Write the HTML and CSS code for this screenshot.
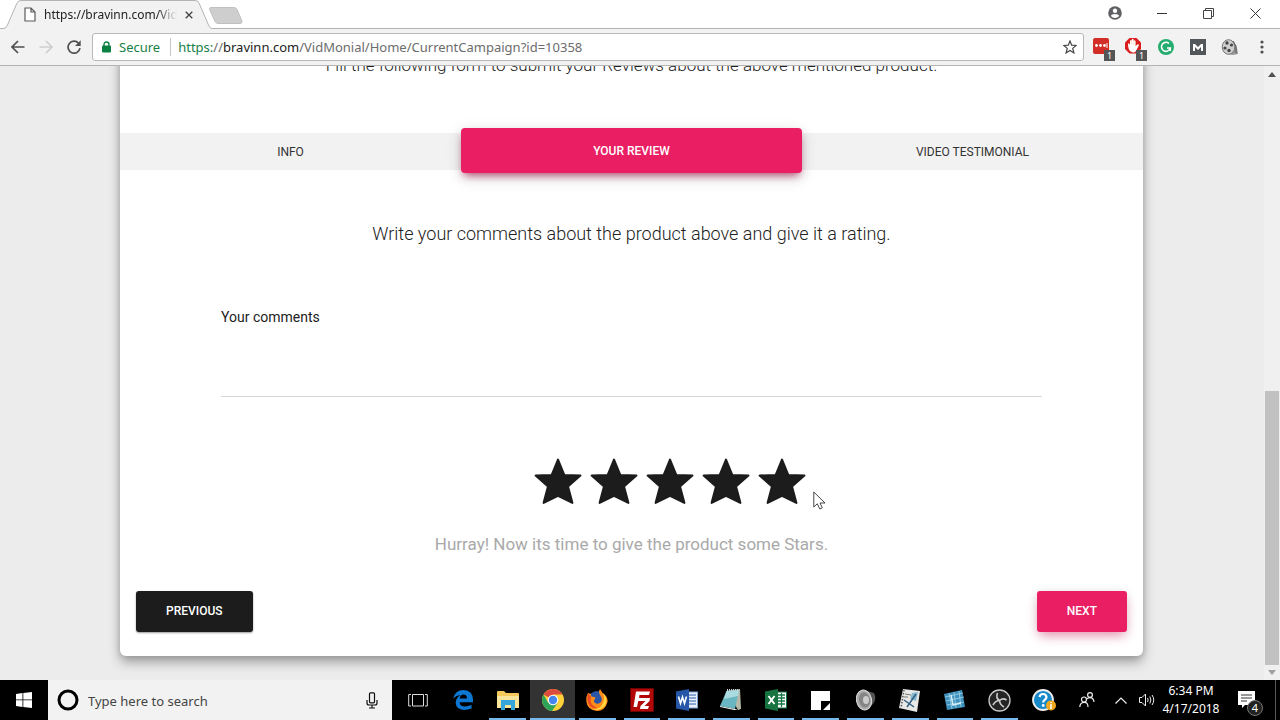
FILE: index.html
```html
<!DOCTYPE html>
<html lang="en">
<head>
<meta charset="utf-8">
<meta name="viewport" content="width=device-width, initial-scale=1">
<title>VidMonial</title>
<link rel="stylesheet" href="styles.css">
</head>
<body>
<div class="tabstrip">
  <div class="browser-tab">
    <svg class="tab-shape" viewBox="0 0 212 29" width="212" height="29"><path d="M0 28.500H3Q6 28.500 7.500 25L17 3Q18.500.5 21 .5H195Q198 .5 199 3L208.500 25Q210 28.500 212 28.500V29H0Z" fill="#f2f2f2"/><path d="M0 28.500H3Q6 28.500 7.500 25L17 3Q18.500.5 21 .5H195Q198 .5 199 3L208.500 25Q210 28.500 212 28.500" fill="none" stroke="#b4b4b4"/></svg>
    <svg class="doc-icon" viewBox="0 0 12 15" width="12" height="15"><path d="M1 1H7L11 5V14H1ZM7 1V5H11" fill="#fff" stroke="#5a5a5a" stroke-width="1.200"/></svg>
    <span class="tab-title">https://bravinn.com/VidMonial</span>
    <button class="plain tab-close" aria-label="Close tab"><svg viewBox="0 0 8 8" width="8" height="8"><path d="M.7.7L7.300 7.300M7.300.7L.7 7.300" stroke="#444" stroke-width="1.300"/></svg></button>
  </div>
  <button class="plain new-tab" aria-label="New tab"><svg viewBox="0 0 34 17" width="34" height="17"><path d="M2 .5H25Q27 .5 28 2.500L33 14Q33.500 16.500 31 16.500H9Q7 16.500 6 14.500L.8 3Q0 .5 2 .5Z" fill="#cecece" stroke="#c0c0c0"/></svg></button>
  <div class="window-buttons">
    <button class="plain" aria-label="Profile"><svg viewBox="0 0 14 14" width="14" height="14"><circle cx="7" cy="7" r="6.800" fill="#5f6063"/><circle cx="7" cy="4.800" r="2.200" fill="#fff"/><path d="M2.800 10Q3.500 8 7 8T11.200 10Q9.500 12 7 12T2.800 10Z" fill="#fff"/></svg></button>
    <button class="plain" aria-label="Minimize"><svg viewBox="0 0 10 10" width="10" height="10"><path d="M0 5.500H10" stroke="#333"/></svg></button>
    <button class="plain" aria-label="Restore"><svg viewBox="0 0 11 11" width="11" height="11"><path d="M.5 2.500H8.500V10.500H.5ZM2.500 2.500V.5H10.500V8.500H8.500" fill="none" stroke="#444"/></svg></button>
    <button class="plain" aria-label="Close"><svg viewBox="0 0 11 11" width="11" height="11"><path d="M.5.5L10.500 10.500M10.500.5L.5 10.500" stroke="#333"/></svg></button>
  </div>
</div>

<div class="toolbar">
  <button class="plain nav-btn" aria-label="Back"><svg viewBox="0 0 14 14" width="14" height="14"><path d="M13.500 7H1.500M7 1L1 7L7 13" fill="none" stroke="#505050" stroke-width="1.700"/></svg></button>
  <button class="plain nav-btn" aria-label="Forward"><svg viewBox="0 0 14 14" width="14" height="14"><path d="M.5 7H12.500M7 1L13 7L7 13" fill="none" stroke="#cfcfcf" stroke-width="1.700"/></svg></button>
  <button class="plain nav-btn" aria-label="Reload"><svg viewBox="0 0 14 14" width="14" height="14"><path d="M11.600 3.200A6 6 0 1 0 13 8.200" fill="none" stroke="#505050" stroke-width="1.700"/><path d="M13.700.3V6H8Z" fill="#505050"/></svg></button>
  <div class="address">
    <svg viewBox="0 0 9 12" width="9" height="12"><path d="M2 5V3.500A2.500 2.500 0 0 1 7 3.500V5" fill="none" stroke="#0b8043" stroke-width="1.400"/><rect x="0" y="4.500" width="9" height="7" rx="1" fill="#0b8043"/></svg>
    <span class="secure">Secure</span>
    <span class="url"><span class="scheme">https:</span>//<span class="host">bravinn.com</span>/VidMonial/Home/CurrentCampaign?id=10358</span>
    <button class="plain" aria-label="Bookmark"><svg viewBox="0 0 14 14" width="14" height="14"><path d="M7 1L8.700 5.200L13.200 5.500L9.700 8.400L10.900 12.900L7 10.400L3.100 12.900L4.300 8.400L.8 5.500L5.300 5.200Z" fill="#fff" stroke="#444" stroke-width="1.200"/></svg></button>
  </div>
  <div class="extensions">
    <button class="plain" aria-label="Password manager"><svg viewBox="0 0 24 24" width="24" height="24"><rect x="3" y="3" width="16" height="16" rx="2" fill="#d32d27"/><circle cx="6.500" cy="10.500" r="1.400" fill="#fff"/><circle cx="10.500" cy="10.500" r="1.400" fill="#fff"/><circle cx="14.500" cy="10.500" r="1.400" fill="#fff"/><path d="M17 8V13" stroke="#fff"/></svg><span class="ext-count">1</span></button>
    <button class="plain" aria-label="Ad blocker"><svg viewBox="0 0 24 24" width="24" height="24"><path d="M7.500 3H14.500L19 7.500V14L14.500 18.500H7.500L3 14V7.500Z" fill="#da1c1c"/><path d="M6 9Q7 7 8 10V6Q9 4 9.700 6V4.500Q10.800 3 11.700 4.500V6Q13 4.500 13.600 6.500V11L16 9L17 10L14 16Q12 19 8 16Q6 14 6 9Z" fill="#fff"/><path d="M9.800 6V10M11.800 6V10" stroke="#eca" stroke-width=".5"/></svg><span class="ext-count">1</span></button>
    <button class="plain" aria-label="Grammar check"><svg viewBox="0 0 18 18" width="18" height="18"><circle cx="9" cy="9" r="8" fill="#25ad6f"/><path d="M12 5.500A4.500 4.500 0 1 0 13.300 10H10M13.300 10V13" fill="none" stroke="#fff" stroke-width="1.600"/></svg></button>
    <button class="plain" aria-label="Mail extension"><svg viewBox="0 0 16 16" width="16" height="16"><path d="M0 0H16V16H0Z" fill="#51575a"/><path d="M3 12V5H5L8 8L11 5H13V12H11V8L8 11L5 8V12Z" fill="#fff"/></svg></button>
    <button class="plain" aria-label="Video extension"><svg viewBox="0 0 18 18" width="18" height="18"><path d="M4 2L12 3L16 10L17 16L12 17L6 16Z" fill="#999"/><ellipse cx="7.500" cy="9" rx="6.300" ry="7.300" fill="#cfcfcf" stroke="#777"/><circle cx="6" cy="5" r="1.700" fill="#444"/><circle cx="10.500" cy="7" r="1.600" fill="#444"/><circle cx="4" cy="10" r="1.600" fill="#444"/><circle cx="8" cy="12.500" r="1.700" fill="#444"/><path d="M12 3L15 8V15" fill="none" stroke="#555"/></svg></button>
    <button class="plain" aria-label="Menu"><svg viewBox="0 0 4 14" width="4" height="14"><circle cx="2" cy="2" r="1.600" fill="#505050"/><circle cx="2" cy="7" r="1.600" fill="#505050"/><circle cx="2" cy="12" r="1.600" fill="#505050"/></svg></button>
  </div>
</div>

<div class="viewport">
  <main class="page">
    <form class="card" onsubmit="return false">
      <p class="lead intro">Fill the following form to submit your Reviews about the above mentioned product.</p>
      <nav class="steps">
        <button type="button" class="step">INFO</button>
        <button type="button" class="step step-active">YOUR REVIEW</button>
        <button type="button" class="step">VIDEO TESTIMONIAL</button>
      </nav>
      <h2 class="lead prompt">Write your comments about the product above and give it a rating.</h2>
      <div class="field">
        <label for="comments">Your comments</label>
        <textarea id="comments"></textarea>
      </div>
      <div class="rating" role="radiogroup" aria-label="Rating">
        <label class="star"><input type="radio" name="rating" value="1" aria-label="1 star"><svg viewBox="0 0 48 46" width="50" height="48"><use href="#star"/></svg></label>
        <label class="star"><input type="radio" name="rating" value="2" aria-label="2 stars"><svg viewBox="0 0 48 46" width="50" height="48"><use href="#star"/></svg></label>
        <label class="star"><input type="radio" name="rating" value="3" aria-label="3 stars"><svg viewBox="0 0 48 46" width="50" height="48"><use href="#star"/></svg></label>
        <label class="star"><input type="radio" name="rating" value="4" aria-label="4 stars"><svg viewBox="0 0 48 46" width="50" height="48"><use href="#star"/></svg></label>
        <label class="star"><input type="radio" name="rating" value="5" aria-label="5 stars"><svg viewBox="0 0 48 46" width="50" height="48"><use href="#star"/></svg></label>
        <svg class="pointer" viewBox="0 0 13 19" width="13" height="19"><path d="M.8 1V16L4.300 12.800L6.800 18L9.300 16.800L7 12H12Z" fill="#fff" stroke="#333" stroke-width=".9"/></svg>
      </div>
      <p class="hint">Hurray! Now its time to give the product some Stars.</p>
      <div class="actions">
        <button type="button" class="btn btn-dark">PREVIOUS</button>
        <button type="button" class="btn btn-pink">NEXT</button>
      </div>
    </form>
  </main>
  <div class="scrollbar">
    <svg viewBox="0 0 8 5" width="8" height="5"><path d="M0 5L4 0L8 5Z" fill="#505050"/></svg>
    <div class="track"><div class="thumb"></div></div>
    <svg viewBox="0 0 8 5" width="8" height="5"><path d="M0 0L4 5L8 0Z" fill="#a0a0a0"/></svg>
  </div>
</div>

<footer class="taskbar">
  <button class="plain start" aria-label="Start"><svg viewBox="0 0 16 16" width="16" height="16"><path d="M0 2L6.500 1.100V7.500H0ZM7.300 1L16 0V7.500H7.300ZM0 8.300H6.500V14.900L0 14ZM7.300 8.300H16V16L7.300 15Z" fill="#fff"/></svg></button>
  <div class="search">
    <svg viewBox="0 0 22 22" width="22" height="22"><circle cx="11" cy="11" r="9" fill="none" stroke="#000" stroke-width="3"/></svg>
    <input type="text" placeholder="Type here to search" aria-label="Type here to search">
    <button class="plain" aria-label="Voice search"><svg viewBox="0 0 12 17" width="12" height="17"><rect x="3.500" y=".8" width="5" height="10" rx="1" fill="none" stroke="#111" stroke-width="1.200"/><path d="M1 8V11Q1 13 3 13H9Q11 13 11 11V8M6 13V16M3 16H9" fill="none" stroke="#111" stroke-width="1.200"/></svg></button>
  </div>
  <div class="apps">
    <button class="plain app" aria-label="Task view"><svg viewBox="0 0 20 14" width="20" height="14"><path d="M4.500 1.500H15.500V13H4.500ZM3 1.500H.7V13H3M17 1.500H19.300V13H17" fill="none" stroke="#ddd"/></svg></button>
    <button class="plain app" aria-label="Edge"><svg viewBox="0 0 20 20" width="20" height="20"><path d="M0 9Q2 0 10.500 0Q20 .5 20 10V12.200H6.500Q7 16.500 12 16.500Q15.500 16.500 18.500 14.700V18.600Q15 20 11 20Q3 19.500 2.700 12.500Q3 7.500 7.500 5Q2.500 5.500 0 9ZM6.700 8.500H14Q14 4.600 10.500 4.600Q7.300 4.600 6.700 8.500Z" fill="#0d78d4"/></svg></button>
    <button class="plain app app-open" aria-label="File Explorer"><svg viewBox="0 0 22 19" width="22" height="19"><path d="M0 1Q0 0 1 0H7L9 2H21Q22 2 22 3V17H0Z" fill="#f5c95a"/><path d="M0 5H22V17H0Z" fill="#fbe59b"/><path d="M4 9H18V19H14V14H8V19H4Z" fill="#35a6dc"/></svg></button>
    <button class="plain app app-open app-current" aria-label="Chrome"><svg viewBox="0 0 22 22" width="22" height="22"><circle cx="11" cy="11" r="11" fill="#fbd039"/><path d="M11 11L1.500 5.500A11 11 0 0 1 20.500 5.500H11Z" fill="#dd4b3e"/><path d="M1.500 5.500A11 11 0 0 0 10 22L15.800 13.800L6 13.500Z" fill="#2da45a"/><circle cx="11" cy="11" r="5.300" fill="#fff"/><circle cx="11" cy="11" r="4.200" fill="#4485ee"/></svg></button>
    <button class="plain app app-open" aria-label="Firefox"><svg viewBox="0 0 22 22" width="22" height="22"><circle cx="11" cy="11" r="9" fill="#2855a5"/><path d="M2 4L5 5Q4 8 8 8Q10 8 9 10Q7 12 9 14Q12 16 15 13Q17 10 14 6Q12 3 14 0Q16 4 19 6Q22 9 21.500 13Q19 22 11 22Q1 21 .3 12Q0 7 2 4Z" fill="#ff8b18"/><path d="M17 4Q23 10 19 17Q13 23 6 20Q14 21 17 14Q19 9 17 4Z" fill="#ffd43d"/><path d="M2 4Q0 12 4 17Q7 20 11 19Q3 16 5 8Z" fill="#e94b23"/></svg></button>
    <button class="plain app app-open" aria-label="FileZilla"><svg viewBox="0 0 24 24" width="24" height="24"><rect x=".5" y=".5" width="23" height="23" fill="#b30808" stroke="#760000" stroke-dasharray="2 1"/><path d="M6 3.500H20L19 7H9.500L9 10H14L13.500 13H8.300L7 19H3.500ZM12 10H20L19.500 13L14.500 18H19L18 21H10L10.500 18L15.500 13H11.500Z" fill="#fff"/></svg></button>
    <button class="plain app app-open" aria-label="Word"><svg viewBox="0 0 22 22" width="22" height="22"><rect x="11" y="3" width="10.500" height="16" fill="#e9f0fb" stroke="#7c9fd1"/><path d="M13 6H20M13 9H20M13 12H20M13 15H20" stroke="#2a5caa"/><path d="M0 2.500L13 0V22L0 19.500Z" fill="#2556a7"/><path d="M2.500 7.500L4.500 14.500L6.500 8L8.500 14.500L10.500 7.500" fill="none" stroke="#fff" stroke-width="1.600"/></svg></button>
    <button class="plain app app-open" aria-label="Notepad"><svg viewBox="0 0 22 22" width="22" height="22"><path d="M7 2L20 0L21 20L18 21Z" fill="#b7b9a8"/><path d="M6.500 2L19 1L15 20L0 17Z" fill="#69b5c2"/><path d="M6.500 2L19 1L18 7L4 10Z" fill="#aadbe0"/><path d="M0 17L15 20L18 21H14L0 18Z" fill="#e9eee9"/><path d="M7 1L19 0" stroke="#ddd" stroke-width="2" stroke-dasharray="1 1"/></svg></button>
    <button class="plain app app-open" aria-label="Excel"><svg viewBox="0 0 22 22" width="22" height="22"><rect x="11" y="3" width="10.500" height="16" fill="#fff" stroke="#177645"/><path d="M13 6H20M13 9H20M13 12H20M13 15H20M16.500 4V18" stroke="#177645" stroke-width="1.300"/><path d="M0 2.500L13 0V22L0 19.500Z" fill="#17733f"/><path d="M3.500 7L9.500 15M9.500 7L3.500 15" stroke="#fff" stroke-width="1.900"/></svg></button>
    <button class="plain app app-open" aria-label="Sticky Notes"><svg viewBox="0 0 19 19" width="19" height="19"><path d="M0 0H19V10H10V19H0Z" fill="#fff"/><path d="M11 18V11H18Z" fill="#000"/><path d="M12 19L19 12V19Z" fill="#fff"/></svg></button>
    <button class="plain app app-open" aria-label="Audio"><svg viewBox="0 0 20 22" width="20" height="22"><path d="M8 1L18 4Q21 10 17 15L9 21Z" fill="#555"/><ellipse cx="8" cy="11" rx="7.500" ry="10" transform="rotate(-12 8 11)" fill="#aaa" stroke="#ddd"/><ellipse cx="8.500" cy="11" rx="5.500" ry="7.500" transform="rotate(-12 8 11)" fill="#858585"/><ellipse cx="10" cy="11" rx="3" ry="4" fill="#ccc"/></svg></button>
    <button class="plain app app-open" aria-label="Journal"><svg viewBox="0 0 22 23" width="22" height="23"><path d="M4 0L21 2L18 23L0 19Z" fill="#e8e9e6"/><path d="M5 1L2 19" stroke="#555" stroke-width="1.500" stroke-dasharray="1.500 1.500"/><path d="M13 4L19 3L17 12L11 10Z" fill="#89b7ce"/><path d="M8 18L17 5M5 11L15 18" stroke="#315f83" stroke-width="1.500"/><path d="M6 5L12 6M5 8H9" stroke="#777"/></svg></button>
    <button class="plain app app-open" aria-label="Registry"><svg viewBox="0 0 21 21" width="21" height="21"><path d="M0 4L18 0L21 17L3 20Z" fill="#3e91bd"/><path d="M1 7L19 3M2 11L20 7M3 15L20 12M5 3L8 19M10 2L12 18M15 1L17 17" stroke="#a3d4e8" stroke-width=".8"/><path d="M7 5L9 15L17 13" fill="none" stroke="#d4eff8" stroke-width="1.500"/></svg></button>
    <button class="plain app app-open" aria-label="OBS"><svg viewBox="0 0 23 23" width="23" height="23"><circle cx="11.500" cy="11.500" r="10.500" fill="#252525" stroke="#c9c9c9" stroke-width="1.300"/><path d="M9.500 4Q7.500 9 11.500 11.500Q15 8.500 18.500 11M11.500 11.500Q12 16 16 18M11.500 11.500Q7.500 11.500 5 16" fill="none" stroke="#ccc" stroke-width="1.600"/></svg></button>
  </div>
  <div class="tray">
    <button class="plain" aria-label="Help"><svg viewBox="0 0 24 22" width="24" height="22"><circle cx="11" cy="11" r="10" fill="#1789c9" stroke="#eee" stroke-width="1.800"/><path d="M7.500 8Q8 5 11 5T14.500 8Q14.500 9.800 12.500 11Q11.200 12 11.200 13.500" fill="none" stroke="#fff" stroke-width="2.200"/><circle cx="11.200" cy="16.500" r="1.400" fill="#fff"/><circle cx="19" cy="16.500" r="5" fill="#f0a91f"/><path d="M19 15V20M19 13V14" stroke="#fff" stroke-width="1.500"/></svg></button>
    <button class="plain" aria-label="People"><svg viewBox="0 0 16 16" width="16" height="16"><g fill="none" stroke="#eee" stroke-width="1.200"><circle cx="5" cy="7.500" r="2.500"/><circle cx="11" cy="3" r="2.400"/><path d="M.8 15Q1 10.500 5 10.300T9 15M8 7Q9 5.600 11 5.600Q14.500 5.600 15 10"/></g></svg></button>
    <button class="plain narrow" aria-label="Show hidden icons"><svg viewBox="0 0 12 7" width="12" height="7"><path d="M.5 6.500L6 1L11.500 6.500" fill="none" stroke="#eee" stroke-width="1.200"/></svg></button>
    <button class="plain narrow" aria-label="Volume"><svg viewBox="0 0 16 14" width="16" height="14"><g fill="none" stroke="#eee"><path d="M.5 4.500H3L6.500 1V13L3 9.500H.5Z"/><path d="M8.500 5Q9.800 7 8.500 9M10.800 3.500Q13 7 10.800 10.500M13 2Q16.500 7 13 12"/></g></svg></button>
    <div class="clock"><span>6:34 PM</span><span>4/17/2018</span></div>
    <button class="plain notes" aria-label="Notifications"><svg viewBox="0 0 18 18" width="18" height="18"><path d="M0 0H17V14H7L4 17V14H0Z" fill="#fff"/><path d="M3 4H14M3 7H14M3 10H9" stroke="#333"/></svg><span class="note-count">4</span></button>
  </div>
</footer>

<svg width="0" height="0" class="defs"><defs><path id="star" d="M24 2.500L30 17.200L45.500 17.800L33.600 28.200L37.800 44L24 37.200L10.200 44L14.400 28.200L2.500 17.800L18 17.200Z" fill="#1c1c1c" stroke="#1c1c1c" stroke-width="2" stroke-linejoin="round"/></defs></svg>
</body>
</html>
```
FILE: styles.css
```css
* { box-sizing: border-box; }
body {
  margin: 0;
  height: 100vh;
  display: flex;
  flex-direction: column;
  overflow: hidden;
  background: #ececec;
  color: #222;
  font-family: Roboto, "Liberation Sans", sans-serif;
}
svg { display: block; flex: none; }
button, input, textarea { font: inherit; color: inherit; }
button { cursor: pointer; }
.defs { position: absolute; }
.plain {
  display: flex;
  align-items: center;
  justify-content: center;
  padding: 0;
  border: 0;
  background: none;
}

.tabstrip {
  display: flex;
  flex: none;
  height: 29px;
  padding-right: 1px;
  background: #fff;
  border-bottom: 1px solid #b4b4b4;
}
.browser-tab {
  position: relative;
  z-index: 1;
  display: flex;
  align-items: center;
  width: 212px;
  height: 29px;
  padding: 0 15px 0 24px;
  font: 12px/16px "Noto Sans", sans-serif;
}
.tab-shape { position: absolute; left: 0; top: 0; z-index: -1; }
.tab-title {
  flex: 1;
  margin: 0 4px 0 8px;
  overflow: hidden;
  white-space: nowrap;
  mask-image: linear-gradient(to right, #000 85%, transparent);
}
.tab-close { width: 16px; height: 16px; }
.new-tab { height: 30px; margin-left: -3px; }
.window-buttons { display: flex; margin-left: auto; height: 26px; }
.window-buttons .plain { width: 47px; }

.toolbar {
  display: flex;
  align-items: center;
  flex: none;
  height: 37px;
  padding: 0 2px 0 4px;
  background: #f2f2f2;
  border-bottom: 1px solid #b4b4b4;
}
.nav-btn { width: 28px; height: 28px; }
.address {
  display: flex;
  align-items: center;
  flex: 1;
  height: 28px;
  margin-left: 4px;
  padding: 0 6px 0 9px;
  background: #fff;
  border: 1px solid #b8b8b8;
  border-radius: 3px;
  font: 13px/18px "Noto Sans", sans-serif;
}
.secure {
  margin: 0 7px 0 8px;
  padding-right: 10px;
  border-right: 1px solid #c8c8c8;
  color: #188048;
}
.url { flex: 1; color: #6c6c6c; white-space: nowrap; }
.scheme { color: #188048; }
.host { color: #222; }
.extensions { display: flex; padding-left: 2px; }
.extensions .plain { position: relative; width: 32px; height: 28px; }
.ext-count {
  position: absolute;
  right: 3px;
  bottom: 0;
  width: 11px;
  background: #555;
  color: #fff;
  font: 9px/11px "Noto Sans", sans-serif;
}

.viewport { display: flex; flex: 1; min-height: 0; }
.page {
  display: flex;
  flex: 1;
  flex-direction: column;
  justify-content: flex-end;
  overflow: hidden;
  padding: 0 121px 24px 120px;
}
.card {
  flex: none;
  background: #fff;
  border-radius: 6px;
  box-shadow: 0 6px 12px rgba(0, 0, 0, .34), 0 0 6px rgba(0, 0, 0, .12);
}
.lead {
  margin: 0;
  font-size: 18px;
  font-weight: 300;
  line-height: 28px;
  text-align: center;
}
.intro { font-size: 17px; }
.steps {
  display: grid;
  grid-template-columns: repeat(3, 1fr);
  height: 37px;
  margin-top: 54px;
  background: #f2f2f2;
}
.step {
  padding: 0;
  border: 0;
  background: none;
  font-size: 12px;
  line-height: 16px;
  color: #333;
}
.step-active {
  margin: -5px 0 -3px;
  border-radius: 4px;
  background: #e91e63;
  box-shadow: 0 5px 9px -3px rgba(160, 0, 60, .7), 0 4px 16px rgba(0, 0, 0, .16);
  color: #fff;
  font-weight: 500;
}
.prompt { margin-top: 50px; }
.field {
  display: flex;
  flex-direction: column;
  margin: 60px 101px 0;
  font-size: 14px;
  line-height: 18px;
}
.field textarea {
  height: 71px;
  padding: 4px 0;
  border: 0;
  border-bottom: 1px solid #d6d6d6;
  background: none;
  outline: 0;
  resize: none;
}
.rating {
  display: flex;
  justify-content: center;
  gap: 6px;
  width: max-content;
  margin: 60px auto 0;
  padding-left: 76px;
  position: relative;
}
.star { position: relative; display: block; cursor: pointer; }
.star input { position: absolute; opacity: 0; margin: 0; }
.pointer { position: absolute; left: 100%; top: 34px; margin-left: 6px; }
.hint {
  margin: 27px 0 0;
  color: #a9a9a9;
  font-size: 17px;
  line-height: 24px;
  text-align: center;
}
.actions {
  display: flex;
  justify-content: space-between;
  padding: 35px 16px 24px;
}
.btn {
  padding: 12px 30px 13px;
  border: 0;
  border-radius: 3px;
  color: #fff;
  font-size: 12px;
  font-weight: 500;
  line-height: 16px;
}
.btn-dark { background: #1c1c1c; box-shadow: 0 1px 2px rgba(0, 0, 0, .4); }
.btn-pink { background: #e91e63; box-shadow: 0 6px 12px -3px rgba(233, 30, 99, .45), 0 2px 12px rgba(0, 0, 0, .12); }

.scrollbar {
  display: flex;
  flex-direction: column;
  align-items: center;
  width: 16px;
  padding: 6px 0 5px;
  background: #f0f0f0;
}
.track {
  display: flex;
  flex: 1;
  flex-direction: column;
  justify-content: flex-end;
  align-self: stretch;
  margin: 5px 1px;
}
.thumb { height: 47%; background: #c1c1c1; }

.taskbar {
  display: flex;
  flex: none;
  height: 40px;
  background: #000;
  color: #fff;
  font: 12px/18px "Noto Sans", sans-serif;
}
.start { width: 48px; }
.search {
  display: flex;
  align-items: center;
  width: 344px;
  padding: 0 14px 0 9px;
  background: #f2f2f2;
}
.search input {
  flex: 1;
  min-width: 0;
  padding: 2px 9px 0;
  border: 0;
  background: none;
  outline: 0;
  color: #333;
  font-size: 13px;
}
.search input::placeholder { color: #444; opacity: 1; }
.apps { display: flex; flex: 1; padding-left: 4px; }
.app { position: relative; flex: 1; }
.app-open::after {
  content: "";
  position: absolute;
  left: 4px;
  right: 4px;
  bottom: 0;
  height: 2px;
  background: #76b9ed;
}
.app-current { background: #333; }
.app-current::after { left: 0; right: 0; }
.tray { display: flex; align-items: stretch; padding-right: 4px; }
.tray .plain { position: relative; width: 43px; }
.tray .narrow { width: 26px; }
.clock {
  display: flex;
  flex-direction: column;
  align-items: center;
  justify-content: center;
  width: 62px;
}
.tray .notes { width: 54px; padding-right: 4px; border-right: 1px solid #555; }
.note-count {
  position: absolute;
  right: 12px;
  bottom: 4px;
  width: 16px;
  border: 1px solid #777;
  border-radius: 50%;
  background: #222;
  color: #fff;
  font-size: 11px;
  line-height: 14px;
}
```
